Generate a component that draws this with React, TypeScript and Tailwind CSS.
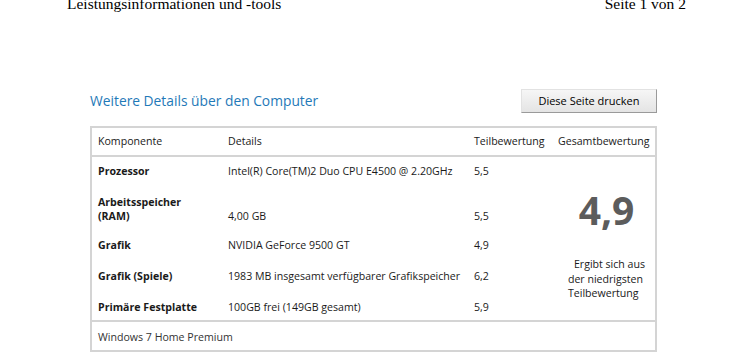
const rows = [
  { name: ["Prozessor"], details: "Intel(R) Core(TM)2 Duo CPU E4500 @ 2.20GHz", score: "5,5", pad: "" },
  { name: ["Arbeitsspeicher", "(RAM)"], details: "4,00 GB", score: "5,5", pad: "pt-[17px]" },
  { name: ["Grafik"], details: "NVIDIA GeForce 9500 GT", score: "4,9", pad: "pt-[15px]" },
  { name: ["Grafik (Spiele)"], details: "1983 MB insgesamt verfügbarer Grafikspeicher", score: "6,2", pad: "pt-[17px]" },
  { name: ["Primäre Festplatte"], details: "100GB frei (149GB gesamt)", score: "5,9", pad: "pt-[17px]" },
];

export default function App() {
  return (
    <div className="h-[359px] w-[747px] overflow-hidden bg-white text-[#1a1a1a]">
      {/* Druckkopf */}
      <div className="mt-[-4px] flex justify-between pl-[67px] pr-[61px] font-['Liberation_Serif',serif] text-[15.5px] leading-[16px] text-black">
        <span>Leistungsinformationen und -tools</span>
        <span>Seite 1 von 2</span>
      </div>

      <div className="ml-[90px] mt-[77px] w-[567px] font-['Open_Sans',sans-serif] text-[10.6px]">
        {/* Titel + Button */}
        <div className="flex items-center justify-between">
          <h1 className="text-[13.8px] leading-[20px] text-[#1f79b8]">Weitere Details über den Computer</h1>
          <button className="h-[24px] w-[136px] border border-b-[#9a9a9a] border-l-[#e2e2e2] border-r-[#9a9a9a] border-t-[#e2e2e2] bg-gradient-to-b from-[#f6f6f6] to-[#e4e4e4] text-[11px] text-black">
            Diese Seite drucken
          </button>
        </div>

        {/* Tabelle */}
        <div className="mt-[13px] border-2 border-[#d4d4d4]">
          <div className="grid h-[29px] grid-cols-[136px_246px_84px_1fr] items-center border-b-2 border-[#d4d4d4]">
            <div className="pl-[6px]">Komponente</div>
            <div>Details</div>
            <div>Teilbewertung</div>
            <div>Gesamtbewertung</div>
          </div>

          <div className="flex">
            <div className="w-[466px] pb-[6px] pt-[7px]">
              {rows.map((r) => (
                <div key={r.details} className={`grid grid-cols-[136px_246px_84px] items-end leading-[14px] ${r.pad}`}>
                  <div className="pl-[6px] font-bold">
                    {r.name.map((n) => (
                      <div key={n}>{n}</div>
                    ))}
                  </div>
                  <div>{r.details}</div>
                  <div>{r.score}</div>
                </div>
              ))}
            </div>
            <div className="flex flex-1 flex-col items-center pt-[33px]">
              <div className="text-[39px] font-bold leading-[40px] text-[#5c5c5c]">4,9</div>
              <div className="mt-[27px] leading-[14.5px]">
                <div className="pl-[6px]">Ergibt sich aus</div>
                <div>der niedrigsten</div>
                <div>Teilbewertung</div>
              </div>
            </div>
          </div>

          <div className="flex h-[30px] items-center border-t-2 border-[#d4d4d4] pl-[6px] pt-[3px] text-[#333]">
            Windows 7 Home Premium
          </div>
        </div>
      </div>
    </div>
  );
}
